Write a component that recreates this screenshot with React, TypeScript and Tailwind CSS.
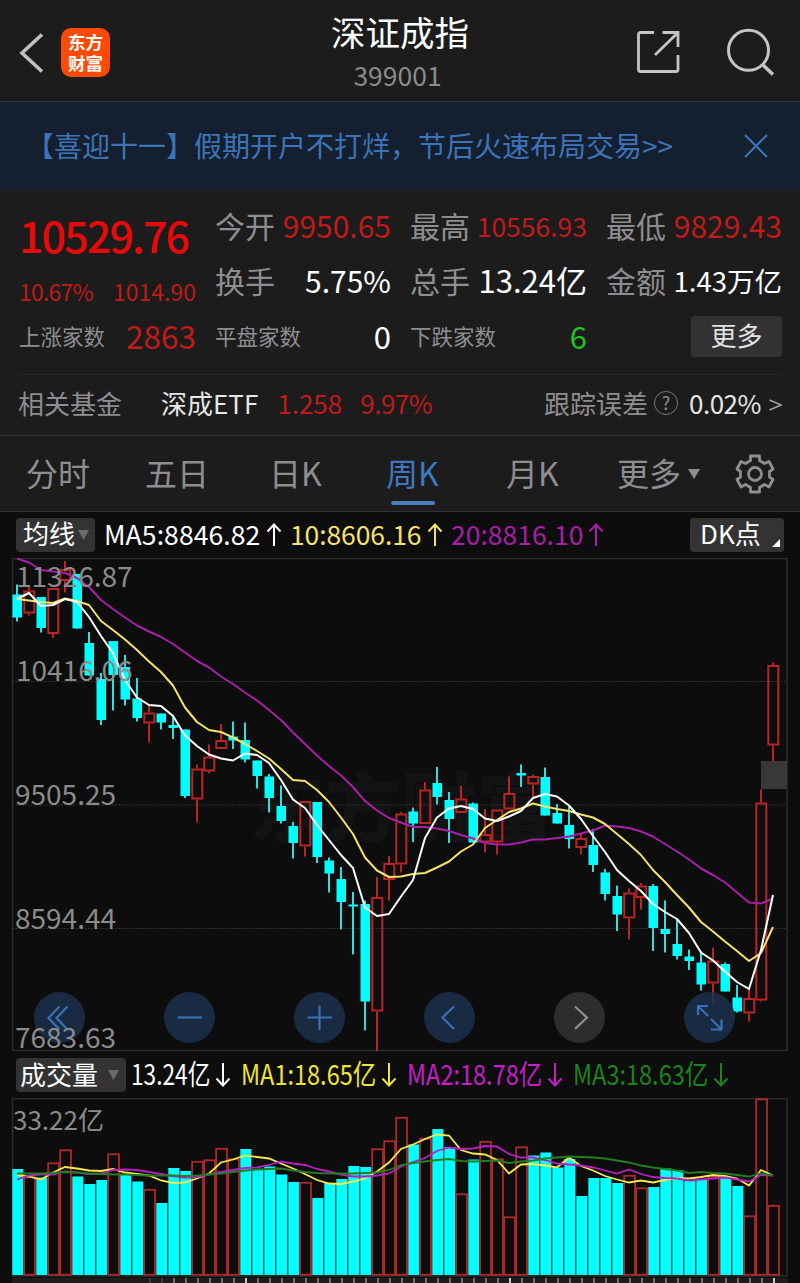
import React from 'react';

type Candle = ['u' | 'd', number, number, number, number];

// direction, high, body top, body bottom, low (chart pixels)
const candles: Candle[] = [
  ['d', 584.5, 594.5, 617.5, 621.5], ['u', 586.5, 590.5, 613.5, 615.5], ['d', 597, 597, 628, 632.5], ['u', 588, 588, 634, 638],
  ['u', 561, 569, 581, 592.5], ['d', 574, 574, 628.5, 628.5], ['d', 632, 643, 675.5, 675.5], ['d', 673, 679, 720, 725],
  ['d', 641, 641, 675, 710.5], ['d', 655, 667, 699.5, 705.5], ['d', 678, 698.5, 718, 721.5], ['u', 704.5, 712.5, 723.5, 742.5],
  ['d', 713.5, 713.5, 722.5, 729.5], ['d', 714.5, 725, 728, 739], ['d', 729.5, 729.5, 796, 798], ['u', 764.5, 768.5, 799.5, 822.5],
  ['u', 744.5, 756.5, 771.5, 773.5], ['u', 724, 740, 749, 749], ['d', 721.5, 736.5, 740.5, 749], ['d', 722.5, 740, 759.5, 762.5],
  ['d', 760.5, 760.5, 776, 788.5], ['d', 774, 776.5, 798, 812.5], ['d', 785.5, 806, 821, 823.5], ['d', 822, 826, 843, 858.5],
  ['u', 801, 801, 846.5, 856.5], ['d', 802, 802, 857, 863], ['d', 857.5, 860.5, 873.5, 892.5], ['d', 867, 879, 902, 929.5],
  ['d', 892, 904.5, 906.5, 954.5], ['d', 900.5, 904, 1001.5, 1030.5], ['u', 877, 897, 1011.5, 1051], ['u', 856, 863, 880, 900.5],
  ['u', 812, 813.5, 864.5, 872.5], ['d', 807.5, 811.5, 823.5, 842], ['u', 782, 789.5, 824, 824], ['d', 767, 783, 797, 804.5],
  ['d', 792, 800, 819, 843], ['u', 786, 798.5, 813, 813], ['d', 802.5, 803.5, 842.5, 842.5], ['u', 809, 834, 842.5, 852.5],
  ['u', 809.5, 809.5, 842.5, 854.5], ['u', 776.5, 793, 809.5, 809.5], ['d', 764.5, 773, 775.5, 787], ['u', 774.5, 776, 784.5, 797],
  ['d', 767.5, 777, 815.5, 815.5], ['d', 804, 813, 823.5, 823.5], ['d', 806.5, 825, 839, 848.5], ['u', 833.5, 838, 848, 854.5],
  ['d', 829, 845, 865, 872], ['d', 869, 872.5, 894, 900.5], ['d', 885.5, 896, 914.5, 931], ['u', 888.5, 892.5, 918.5, 939.5],
  ['u', 883, 885.5, 898, 909.5], ['d', 884, 886, 928, 951], ['d', 900.5, 929, 934, 952.5], ['d', 919.5, 944, 956, 959.5],
  ['d', 949.5, 956.5, 961, 970], ['d', 951, 962.5, 984.5, 990.5], ['u', 947.5, 960.5, 983.5, 1004.5], ['d', 962.5, 964, 991.5, 991.5],
  ['d', 985, 997.5, 1011.5, 1012.5], ['u', 988.5, 998, 1013.5, 1021.5], ['u', 789.5, 802.5, 1000.5, 1001.5], ['u', 662.5, 665, 745.5, 761],
];

const ma5 = [
  599, 593, 606, 605, 599, 602, 617, 636, 653, 680, 697.5, 705, 706, 716, 735.5, 746, 754.5, 758.5, 760.5, 753.5, 755, 763,
  780, 799.5, 808, 825, 840, 855, 868, 907.5, 916, 914, 896.5, 880, 838, 817.5, 808.5, 806, 809, 818.5, 821, 816.5, 811, 798,
  794, 796.5, 805.5, 819, 836, 852, 870, 881, 891, 904, 912, 919, 933, 952.5, 960.5, 971.5, 982, 989, 950, 895,
];

const ma10 = [
  599, 600.5, 602, 603, 598.5, 601, 605, 621, 630, 639.5, 650, 661.5, 672, 685.5, 707.5, 722, 730, 732, 737.5, 744, 751, 758.5,
  769, 780, 781, 790, 802, 817.5, 834, 857.5, 870.5, 877, 876.5, 874, 873, 867.5, 861.5, 851.5, 844.5, 828, 820, 812, 808.5,
  803.5, 806.5, 809, 811, 814.5, 817.5, 824, 834, 844, 855, 870, 882, 895, 907.5, 922, 931.5, 941.5, 951, 961, 953, 927,
];

const ma20 = [
  558.5, 562.5, 570, 571.5, 573, 578, 587, 600, 609, 617.5, 625.5, 631.5, 637, 644, 652.5, 661, 667.5, 676.5, 684, 692.5, 700.5, 710,
  720, 732.5, 744, 755.5, 766, 775.5, 787, 801, 810.5, 818, 822.5, 827, 827, 828.5, 831, 835, 838.5, 843, 844.5, 844.5, 842.5,
  839.5, 839.5, 838, 836.5, 833.5, 830.5, 825.5, 826.5, 828, 831.5, 836.5, 844, 851.5, 859.5, 868.5, 875, 882.5, 892.5, 902.5, 903.5, 898.5,
];

// volume bars, u = hollow red, d = solid cyan
const volumes: ['u' | 'd', number][] = [
  ['d', 1169], ['u', 1176.5], ['d', 1177.5], ['u', 1162.5], ['u', 1149.5], ['d', 1176.5], ['d', 1184], ['d', 1180],
  ['u', 1153.5], ['d', 1175], ['d', 1181.5], ['u', 1189], ['d', 1203], ['d', 1168], ['d', 1171], ['u', 1161],
  ['u', 1159.5], ['u', 1148], ['u', 1158.5], ['d', 1149], ['d', 1169], ['d', 1166.5], ['d', 1174.5], ['d', 1182],
  ['u', 1182], ['d', 1198], ['d', 1183], ['d', 1179], ['d', 1166], ['d', 1167], ['u', 1148.5], ['u', 1140.5],
  ['u', 1117], ['d', 1144.5], ['u', 1138], ['d', 1129], ['d', 1147], ['u', 1193.5], ['d', 1159.5], ['u', 1141],
  ['u', 1158.5], ['u', 1216.5], ['u', 1146.5], ['d', 1155.5], ['d', 1152.5], ['d', 1167.5], ['d', 1159], ['d', 1196],
  ['d', 1178], ['d', 1178], ['d', 1183], ['u', 1175], ['u', 1187.5], ['d', 1187], ['d', 1168.5], ['d', 1170],
  ['d', 1181], ['d', 1179], ['u', 1176], ['d', 1178], ['d', 1186], ['u', 1215.5], ['u', 1098.5], ['u', 1205],
];

const volMa1 = [
  1175, 1176.5, 1179.5, 1172.5, 1167, 1168.5, 1170.5, 1171, 1169, 1172.5, 1174, 1175.5, 1180.5, 1183, 1182.5, 1178.5, 1173.5,
  1162.5, 1159.5, 1155.5, 1157, 1158.5, 1163.5, 1168.5, 1174, 1180, 1183.5, 1184, 1181.5, 1178.5, 1171.5, 1162.5, 1149, 1144.5,
  1139, 1134.5, 1135.5, 1150, 1153.5, 1154.5, 1160, 1173.5, 1164.5, 1164, 1165.5, 1167.5, 1157.5, 1166, 1170.5, 1176, 1179.5,
  1182.5, 1180.5, 1182.5, 1180, 1178, 1178.5, 1177, 1175, 1176, 1178.5, 1185.5, 1170, 1175.5,
];

const volMa2 = [
  1179.5, 1175.5, 1174.5, 1174.5, 1171.5, 1172.5, 1174, 1173.5, 1170, 1169.5, 1170, 1172, 1174, 1176, 1177.5, 1177, 1174.5,
  1172, 1170, 1168, 1167.5, 1165, 1161.5, 1163.5, 1165, 1169, 1171.5, 1174.5, 1176.5, 1176.5, 1175.5, 1173.5, 1166.5, 1162,
  1158, 1151, 1147.5, 1149, 1148.5, 1146, 1146.5, 1154, 1157.5, 1157.5, 1160, 1163.5, 1164.5, 1165.5, 1167.5, 1170.5, 1173.5,
  1169.5, 1174, 1177, 1178, 1178.5, 1180.5, 1179.5, 1178.5, 1177.5, 1179.5, 1181.5, 1175, 1175.5,
];

const volMa3 = [
  1173.5, 1173.5, 1173.5, 1173, 1172, 1172.5, 1173.5, 1174, 1174.5, 1174.5, 1175, 1175.5, 1175.5, 1175.5, 1176, 1175.5, 1174.5,
  1173.5, 1172, 1170.5, 1169.5, 1169, 1168.5, 1170.5, 1172, 1173, 1173.5, 1173.5, 1173.5, 1173, 1172.5, 1170, 1165, 1163,
  1161.5, 1160, 1159, 1161, 1161.5, 1161, 1160.5, 1163, 1161.5, 1160.5, 1158.5, 1157.5, 1156.5, 1157, 1157.5, 1158.5, 1160.5,
  1162.5, 1165.5, 1167.5, 1169, 1170.5, 1173, 1172, 1173, 1173.5, 1175, 1176.5, 1173.5, 1175.5,
];

const xAt = (i: number) => 17 + i * 12;
const toPoints = (values: number[]) => values.map((y, i) => `${xAt(i)},${y}`).join(' ');

const priceLabels = [
  { text: '11326.87', pos: 'left-[16px] top-[-3px]' },
  { text: '10416.06', pos: 'left-[16px] top-[91px]' },
  { text: '9505.25', pos: 'left-[15px] top-[215px]' },
  { text: '8594.44', pos: 'left-[15px] top-[339px]' },
  { text: '7683.63', pos: 'left-[15px] top-[458px]' },
];

const tools = [
  { name: 'first', d: 'M25.5 14.5 14.5 26 25.5 37.5M33.5 14.5 22.5 26 33.5 37.5', active: true },
  { name: 'minus', d: 'M13.5 25.5H38', active: true },
  { name: 'plus', d: 'M13.5 25.5H38M25.5 13.5V38', active: true },
  { name: 'prev', d: 'M30 14.5 18.5 25.5 30 37', active: true },
  { name: 'next', d: 'M21 14.5 33 25.5 21 37', active: false },
  { name: 'expand', d: 'M24 24 14.5 14.5M14 23V14H24M27 27 37 37M27 37.5H37.5V27.5', active: true },
];

function Arrow({ up }: { up?: boolean }) {
  return (
    <svg className="h-6 w-4 shrink-0" viewBox="0 0 16 24" fill="none" stroke="currentColor" strokeWidth="2">
      <path d={up ? 'M8 23V2M1.5 8.5 8 1.5 14.5 8.5' : 'M8 0V22M1.5 15.5 8 22.5 14.5 15.5'} />
    </svg>
  );
}

function Stat({ label, value, className }: { label: string; value: string; className: string }) {
  return (
    <div className="flex h-[55px] items-center justify-between">
      <span className="text-[30px] text-[#8e8e91]">{label}</span>
      <span className={className}>{value}</span>
    </div>
  );
}

function Header() {
  return (
    <header className="flex h-[102px] border-b border-[#2b3540]">
      <div className="flex w-[260px] items-start pl-[19px] pt-7">
        <svg className="mt-1 h-[42px] w-[26px]" viewBox="0 0 26 42" fill="none" stroke="#c0c0c0" strokeWidth="3.6">
          <path d="M23 2.5 3 21 23 39.5" />
        </svg>
        <div className="ml-4 h-[49px] w-[49px] rounded-[10px] bg-[#ff4a05] px-[7px] pt-[3px] text-[17.5px] font-bold leading-[21px] text-white">
          东方
          <br />
          财富
        </div>
      </div>
      <div className="flex w-[280px] flex-col items-center">
        <h1 className="mt-1.5 text-[34.5px] font-normal leading-[50px] text-white">深证成指</h1>
        <span className="mr-[5px] mt-[3px] text-[26.5px] leading-8 text-[#8a8a8d]">399001</span>
      </div>
      <div className="flex w-[260px] items-start pl-[96px] pt-7">
        <svg className="h-[48px] w-[46px]" viewBox="0 0 46 48" fill="none" stroke="#c4c4c4" strokeWidth="2.8">
          <path d="M18 4.5H4.5Q2.5 4.5 2.5 6.5V41.5Q2.5 43.5 4.5 43.5H40Q42 43.5 42 41.5V27M26.5 4.5H42V19M42 4.5 19 27" />
        </svg>
        <svg className="ml-[44px] h-[50px] w-[50px]" viewBox="0 0 50 50" fill="none" stroke="#c4c4c4" strokeWidth="3">
          <circle cx="22.5" cy="22.3" r="20" />
          <path d="M36 36 47 46.5" strokeWidth="3.5" />
        </svg>
      </div>
    </header>
  );
}

function Banner() {
  return (
    <div className="flex h-[88px] items-center justify-between bg-[#14202f] pl-[26px] pr-8 text-[#3d74b8]">
      <span className="-mt-0.5 text-[28px]">【喜迎十一】假期开户不打烊，节后火速布局交易&gt;&gt;</span>
      <svg className="h-6 w-6" viewBox="0 0 24 24" fill="none" stroke="currentColor" strokeWidth="2.2">
        <path d="M1 1 23 23M23 1 1 23" />
      </svg>
    </div>
  );
}

function Quote() {
  return (
    <section className="h-[246px] border-b border-[#333]">
      <div className="grid h-[184px] grid-cols-[177px_176px_177px_176px] gap-x-[19px] px-[19px] pt-2">
        <div className="text-[#c01a1a]">
          <div className="h-[67px] pt-[3px] text-[43px] font-medium leading-[67px] tracking-[-1.9px] text-[#e60a0a]">10529.76</div>
          <div className="flex h-[45px] items-end justify-between text-[23px] leading-[38px]">
            <span className="tracking-[-0.8px]">10.67%</span>
            <span>1014.90</span>
          </div>
          <div className="flex h-[53px] items-center justify-between">
            <span className="text-[21.5px] text-[#8e8e91]">上涨家数</span>
            <span className="-mt-0.5 text-[31.5px]">2863</span>
          </div>
        </div>
        <div>
          <Stat label="今开" value="9950.65" className="text-[30px] text-[#c01a1a]" />
          <Stat label="换手" value="5.75%" className="text-[30px] text-white" />
          <div className="flex h-[57px] items-center justify-between">
            <span className="text-[21.5px] text-[#8e8e91]">平盘家数</span>
            <span className="text-[31px] text-white">0</span>
          </div>
        </div>
        <div>
          <Stat label="最高" value="10556.93" className="text-[26.5px] text-[#c01a1a]" />
          <Stat label="总手" value="13.24亿" className="text-[31px] text-white" />
          <div className="flex h-[57px] items-center justify-between">
            <span className="text-[21.5px] text-[#8e8e91]">下跌家数</span>
            <span className="text-[31px] text-[#1fc41f]">6</span>
          </div>
        </div>
        <div>
          <Stat label="最低" value="9829.43" className="text-[30px] text-[#c01a1a]" />
          <Stat label="金额" value="1.43万亿" className="text-[27.5px] text-white" />
          <div className="flex h-[57px] items-center justify-end">
            <button className="h-[41px] w-[91px] rounded bg-[#323232] pb-1 text-[26px] leading-[37px] text-[#e2e2e2]">更多</button>
          </div>
        </div>
      </div>
      <div className="mx-[18px] flex h-[60px] items-center border-t border-[#262626] pb-1 text-[26px]">
        <span className="text-[#8e8e91]">相关基金</span>
        <span className="ml-[39px] text-[#e6e6e6]">深成ETF</span>
        <span className="ml-[19px] text-[#c01a1a]">1.258</span>
        <span className="ml-[18px] tracking-[-0.5px] text-[#c01a1a]">9.97%</span>
        <span className="ml-auto text-[#8e8e91]">跟踪误差</span>
        <span className="ml-1.5 flex h-6 w-6 items-center justify-center rounded-full border-[1.5px] border-[#77777a] text-[18px] text-[#8e8e91]">?</span>
        <span className="ml-[11px] tracking-[-0.5px] text-[#e6e6e6]">0.02%</span>
        <svg className="ml-2 mt-1 h-3 w-[13px]" viewBox="0 0 13 12" fill="none" stroke="#a0a0a0" strokeWidth="1.8">
          <path d="M.5 1 12 6 .5 11" />
        </svg>
      </div>
    </section>
  );
}

function Tabs() {
  return (
    <nav className="flex h-[76px] items-start border-b border-[#333] pl-[26px] text-[32px] leading-[72px] text-[#8e8e91]">
      <span className="w-[119px]">分时</span>
      <span className="w-[124px]">五日</span>
      <span className="w-[117px]">日K</span>
      <span className="relative w-[120px] text-[#3f78be]">
        周K
        <i className="absolute left-[5px] top-[65px] h-1 w-[44px] rounded-full bg-[#4a7dbd]" />
      </span>
      <span className="w-[111px]">月K</span>
      <span>更多</span>
      <svg className="ml-[7px] mt-[33px] h-[10px] w-3" viewBox="0 0 12 10" fill="#8e8e91">
        <path d="M0 0H12L6 10Z" />
      </svg>
      <svg className="ml-[34px] mt-[17px] h-[42px] w-[42px]" viewBox="-21 -21 42 42" fill="none" stroke="#8e8e91" strokeWidth="2.8" strokeLinejoin="round">
        <path d="M-4.5 -18H4.5V-13.5L9.5 -10.5 14 -12.5 18 -5 14.5 -2.5V3L18 5.5 14 13 9.5 10.5 4.5 13.5V18H-4.5V13.5L-9.5 10.5 -14 13 -18 5.5 -14.5 3V-2.5L-18 -5 -14 -12.5 -9.5 -10.5 -4.5 -13.5Z" />
        <circle r="6.5" />
      </svg>
    </nav>
  );
}

function MaBar() {
  return (
    <div className="flex h-[46px] items-center pb-px pl-4 text-[26.5px] leading-[34px]">
      <div className="flex h-[34px] w-[79px] items-center rounded bg-[#333] pl-[7px] text-[26px] leading-[30px] text-white">
        <span className="-mt-[3px]">均线</span>
        <svg className="ml-[3px] h-[10px] w-[11px]" viewBox="0 0 11 10" fill="#6a6a6a">
          <path d="M0 0H11L5.5 10Z" />
        </svg>
      </div>
      <div className="ml-[9px] flex w-[186px] items-center text-white">
        <span className="w-[162px] pb-px tracking-[0.1px]">MA5:8846.82</span>
        <Arrow up />
      </div>
      <div className="flex w-[161px] items-center text-[#f5e26b]">
        <span className="w-[137px] pb-px tracking-[-0.1px]">10:8606.16</span>
        <Arrow up />
      </div>
      <div className="flex items-center text-[#a81fa8]">
        <span className="w-[137px] pb-px">20:8816.10</span>
        <Arrow up />
      </div>
      <div className="ml-auto mr-4 flex h-[34px] w-[94px] items-center rounded bg-[#333] pl-[10px] text-[26px] leading-[30px] text-white">
        <span className="-mt-[3px]">DK点</span>
        <svg className="ml-auto mr-1 mt-4 h-2 w-2" viewBox="0 0 8 8" fill="#fff">
          <path d="M8 0V8H0Z" />
        </svg>
      </div>
    </div>
  );
}

function KLineChart() {
  return (
    <div className="relative h-[494px]">
      <div className="absolute left-[249px] top-[190px] text-[76px] font-black leading-[110px] text-[#131313]">东方财富</div>
      <svg className="absolute inset-0 h-[494px] w-[800px]" viewBox="0 558 800 494" fill="none">
        <rect x="12.5" y="558.5" width="774.5" height="492" stroke="#2c2c2e" strokeWidth="1.5" />
        <path d="M13 681.5H787M13 805H787M13 928.5H787" stroke="#3a3a3a" strokeDasharray="1.5 1.5" />
        {candles.map(([dir, high, top, bottom, low], i) =>
          dir === 'd' ? (
            <g key={i} fill="#00ffff">
              <rect x={xAt(i) - 1} y={high} width="2" height={low - high} fill="#2fdede" />
              <rect x={xAt(i) - 4.5} y={top} width="9.5" height={bottom - top} />
            </g>
          ) : (
            <g key={i} stroke="#b92525" strokeWidth="2">
              <path d={`M${xAt(i)} ${high}V${top}M${xAt(i)} ${bottom}V${low}`} />
              <rect x={xAt(i) - 4.7} y={top + 1} width="10" height={bottom - top - 2} />
            </g>
          )
        )}
        <rect x="761" y="761" width="26" height="28" fill="#383838" />
        <polyline points={toPoints(ma20)} stroke="#a81fa8" strokeWidth="2" strokeLinejoin="round" />
        <polyline points={toPoints(ma10)} stroke="#f5e26b" strokeWidth="2" strokeLinejoin="round" />
        <polyline points={toPoints(ma5)} stroke="#fff" strokeWidth="2" strokeLinejoin="round" />
      </svg>
      <div className="absolute left-[34px] top-[434px] flex gap-[79px]">
        {tools.map((tool) => (
          <button key={tool.name} className={tool.active ? 'text-[#3a70b5]' : 'text-[#909090]'}>
            <svg className="h-[51px] w-[51px]" viewBox="0 0 51 51" fill="none">
              <circle cx="25.5" cy="25.5" r="25.5" fill={tool.active ? '#1b314e' : '#333'} fillOpacity="0.84" />
              <path d={tool.d} stroke="currentColor" strokeWidth="2.2" />
            </svg>
          </button>
        ))}
      </div>
      {priceLabels.map((label) => (
        <span key={label.text} className={`absolute text-[28px] leading-[40px] text-[#8b8b8b] ${label.pos}`}>{label.text}</span>
      ))}
    </div>
  );
}

function VolumeBar() {
  return (
    <div className="flex h-[46px] items-center pl-4 text-[28px] leading-[34px]">
      <div className="flex h-[34px] w-[110px] items-center rounded bg-[#333] pl-[4px] text-[26px] leading-[30px] text-white">
        <span className="-mt-[3px]">成交量</span>
        <svg className="ml-[10px] h-[10px] w-[11px]" viewBox="0 0 11 10" fill="#6a6a6a">
          <path d="M0 0H11L5.5 10Z" />
        </svg>
      </div>
      <div className="ml-[5px] flex w-[110px] items-center text-white">
        <span className="w-[84px] origin-left scale-x-[0.81] whitespace-nowrap pb-1">13.24亿</span>
        <Arrow />
      </div>
      <div className="flex w-[166px] items-center text-[#f0e532]">
        <span className="w-[140px] origin-left scale-x-[0.84] whitespace-nowrap pb-1">MA1:18.65亿</span>
        <Arrow />
      </div>
      <div className="flex w-[166px] items-center text-[#c81ec8]">
        <span className="w-[140px] origin-left scale-x-[0.84] whitespace-nowrap pb-1">MA2:18.78亿</span>
        <Arrow />
      </div>
      <div className="flex items-center text-[#1c841c]">
        <span className="w-[140px] origin-left scale-x-[0.84] whitespace-nowrap pb-1">MA3:18.63亿</span>
        <Arrow />
      </div>
    </div>
  );
}

function VolumeChart() {
  return (
    <div className="relative h-[185px]">
      <svg className="h-[185px] w-[800px]" viewBox="0 1098 800 185" fill="none">
        <rect x="12.5" y="1098.5" width="774.5" height="177.5" stroke="#2c2c2e" strokeWidth="1.5" />
        {volumes.map(([dir, top], i) =>
          dir === 'd' ? (
            <rect key={i} x={xAt(i) - 4.7} y={top} width="11" height={1275 - top} fill="#00ffff" />
          ) : (
            <rect key={i} x={xAt(i) - 4.8} y={top + 0.8} width="10.8" height={1274 - top} stroke="#b02a2a" strokeWidth="1.8" />
          )
        )}
        <polyline points={toPoints(volMa1)} stroke="#f5ea4e" strokeWidth="1.8" />
        <polyline points={toPoints(volMa2)} stroke="#b81fc0" strokeWidth="1.8" />
        <polyline points={toPoints(volMa3)} stroke="#237d23" strokeWidth="1.8" />
        <rect x="12" y="1278" width="776" height="5" fill="#1d1d1e" />
        {Array.from({ length: 53 }, (_, i) => (
          <rect key={i} x={149 + i * 12} y="1278" width="2" height="5" fill={i % 22 === 8 ? '#c8c8c8' : i < 2 ? '#3c3c3c' : '#707070'} />
        ))}
      </svg>
      <span className="absolute left-[13px] top-[2px] text-[26px] leading-[38px] text-[#8b8b8b]">33.22亿</span>
    </div>
  );
}

export default function App() {
  return (
    <main className="h-[1283px] w-[800px] overflow-hidden bg-[#1c1c1c] font-['Noto_Sans_CJK_SC',sans-serif]">
      <Header />
      <Banner />
      <Quote />
      <Tabs />
      <div className="bg-[#0d0d0d]">
        <MaBar />
        <KLineChart />
        <VolumeBar />
        <VolumeChart />
      </div>
    </main>
  );
}
